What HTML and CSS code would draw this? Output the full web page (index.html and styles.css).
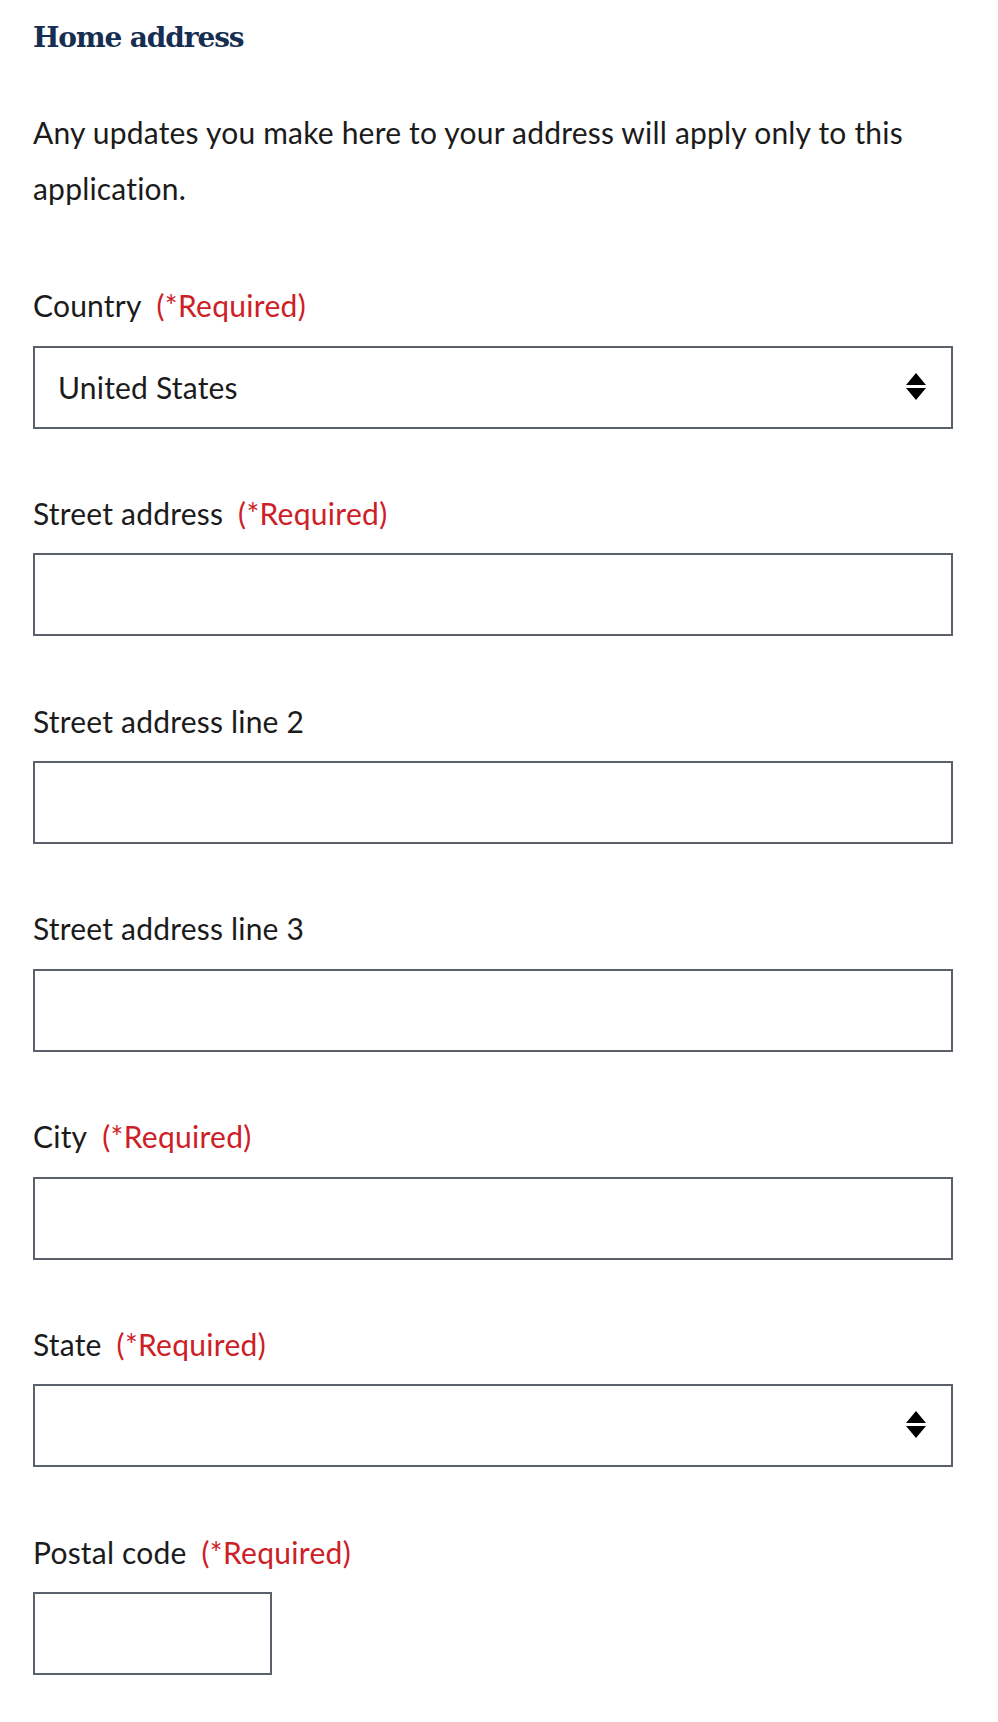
FILE: index.html
```html
<!DOCTYPE html>
<html lang="en">
<head>
<meta charset="utf-8">
<title>Home address</title>
<link rel="stylesheet" href="styles.css">
</head>
<body>
<main class="form">
  <h2 class="title">Home address</h2>
  <p class="intro">Any updates you make here to your address will apply only to this application.</p>

  <div class="field">
    <label class="label" for="country">Country<span class="req">(*Required)</span></label>
    <div class="select-wrap">
      <select id="country" class="control select">
        <option>United States</option>
      </select>
      <svg class="sort-icon" width="20" height="28" viewBox="0 0 20 28" aria-hidden="true"><path d="M10 0 L20 12 L0 12 Z M0 15 L20 15 L10 27 Z" fill="#000"/></svg>
    </div>
  </div>

  <div class="field">
    <label class="label" for="street">Street address<span class="req">(*Required)</span></label>
    <input id="street" class="control" type="text">
  </div>

  <div class="field">
    <label class="label" for="street2">Street address line 2</label>
    <input id="street2" class="control" type="text">
  </div>

  <div class="field">
    <label class="label" for="street3">Street address line 3</label>
    <input id="street3" class="control" type="text">
  </div>

  <div class="field">
    <label class="label" for="city">City<span class="req">(*Required)</span></label>
    <input id="city" class="control" type="text">
  </div>

  <div class="field">
    <label class="label" for="state">State<span class="req">(*Required)</span></label>
    <div class="select-wrap">
      <select id="state" class="control select">
        <option></option>
      </select>
      <svg class="sort-icon" width="20" height="28" viewBox="0 0 20 28" aria-hidden="true"><path d="M10 0 L20 12 L0 12 Z M0 15 L20 15 L10 27 Z" fill="#000"/></svg>
    </div>
  </div>

  <div class="field">
    <label class="label" for="postal">Postal code<span class="req">(*Required)</span></label>
    <input id="postal" class="control postal" type="text">
  </div>
</main>
</body>
</html>
```
FILE: styles.css
```css
html, body {
  margin: 0;
  padding: 0;
  background: #fff;
}

body {
  font-family: Lato, "Noto Sans", sans-serif;
  color: #1b1b1b;
}

.form {
  width: 920px;
  padding: 21px 0 0 33px;
}

.title {
  margin: 0;
  font-family: "DejaVu Serif", "Liberation Serif", serif;
  font-weight: bold;
  font-size: 28px;
  line-height: 34px;
  color: #162e51;
  letter-spacing: -1.1px;
}

.intro {
  margin: 49px 0 0;
  font-size: 30px;
  line-height: 56px;
  letter-spacing: 0.2px;
}

.field {
  display: flex;
  flex-direction: column;
  align-items: flex-start;
}

.intro + .field {
  margin-top: 69px;
}

.field + .field {
  margin-top: 64.3px;
}

.label {
  display: block;
  font-size: 30px;
  line-height: 40px;
  letter-spacing: 0.2px;
  margin-bottom: 20.5px;
}

.req {
  color: #cd2026;
  margin-left: 15px;
  letter-spacing: 0.3px;
}

.control {
  box-sizing: border-box;
  width: 920px;
  height: 83px;
  margin: 0;
  border: 2px solid #5b616b;
  border-radius: 0;
  background: #fff;
  font-family: inherit;
  font-size: 30px;
  letter-spacing: 0.2px;
  color: #1b1b1b;
  padding: 0 23px;
  outline: none;
}

.select-wrap {
  position: relative;
  width: 920px;
}

.select {
  display: block;
  appearance: none;
  -webkit-appearance: none;
}

.sort-icon {
  position: absolute;
  right: 27px;
  top: 27px;
  pointer-events: none;
}

.postal {
  width: 239px;
}
```
